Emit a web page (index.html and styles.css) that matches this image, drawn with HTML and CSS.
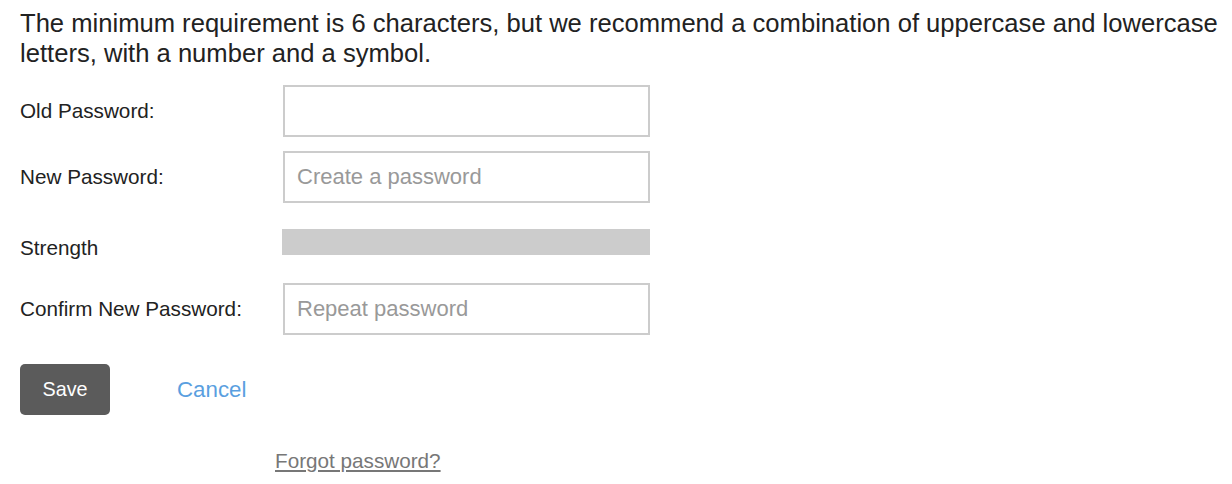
FILE: index.html
```html
<!DOCTYPE html>
<html lang="en">

<head>
	<meta charset="UTF-8">
	<meta name="viewport" content="width=device-width, initial-scale=1.0">
	<title>Change Password</title>
	<link rel="stylesheet" href="styles.css">
</head>

<body>
	<div class="change-password">
		<p class="hint">The minimum requirement is 6 characters, but we recommend a combination of uppercase and lowercase letters, with a number and a symbol.</p>
		<div class="form-row">
			<label for="old">Old Password:</label>
			<input type="password" id="old">
		</div>
		<div class="form-row">
			<label for="new">New Password:</label>
			<input type="password" id="new" placeholder="Create a password">
		</div>
		<div class="form-row strength-row">
			<label>Strength</label>
			<div class="strength"><div class="strength-bar"></div></div>
		</div>
		<div class="form-row">
			<label for="confirm">Confirm New Password:</label>
			<input type="password" id="confirm" placeholder="Repeat password">
		</div>
		<div class="actions">
			<button class="save">Save</button>
			<a href="#" class="cancel">Cancel</a>
		</div>
		<a href="#" class="forgot">Forgot password?</a>
	</div>
</body>

</html>
```

FILE: styles.css
```css
	body {
		margin: 0;
		padding: 8px 2px 8px 20px;
		font-family: "Liberation Sans", Arial, sans-serif;
		color: #333;
		background-color: white;
	}

	.hint {
		margin: 0 0 17px 0;
		font-size: 25.6px;
		line-height: 30px;
		color: #222;
	}

	.form-row {
		display: flex;
		align-items: center;
		margin-bottom: 14px;
	}

	.form-row label {
		width: 263px;
		flex-shrink: 0;
		font-size: 20.7px;
		color: #222;
	}

	.form-row input {
		box-sizing: border-box;
		width: 367px;
		height: 52px;
		padding: 0 12px;
		border: 2px solid #ccc;
		border-radius: 0;
		font-family: inherit;
		font-size: 22px;
		color: #333;
		outline: none;
	}

	.form-row input::placeholder {
		color: #999;
	}

	.strength-row {
		align-items: flex-start;
		height: 26px;
		margin-top: 26px;
		margin-bottom: 28px;
	}

	.strength-row label {
		padding-top: 7px;
	}

	.strength {
		width: 368px;
		height: 26px;
		margin-left: -1px;
		background-color: #ccc;
	}

	.strength-bar {
		width: 0;
		height: 100%;
	}

	.actions {
		display: flex;
		align-items: center;
		margin-top: 29px;
	}

	.save {
		width: 90px;
		height: 51px;
		border: none;
		border-radius: 5px;
		background-color: #5b5b5b;
		color: white;
		font-family: inherit;
		font-size: 19.8px;
		cursor: pointer;
	}

	.cancel {
		margin-left: 67px;
		font-size: 22.3px;
		color: #5a9fe0;
		text-decoration: none;
	}

	.forgot {
		display: inline-block;
		margin: 34px 0 0 255px;
		font-size: 20.7px;
		color: #777;
	}
```
